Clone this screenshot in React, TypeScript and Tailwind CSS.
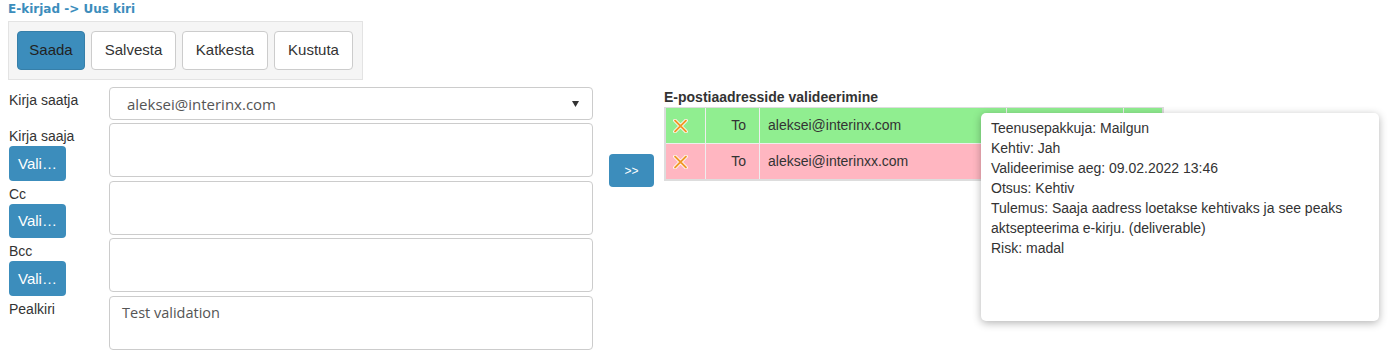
import React from "react";

const sans = "font-['Liberation_Sans',Arial,sans-serif]";
const field = "font-['Open_Sans',sans-serif]";

const CrossIcon = () => (
  <svg width="15" height="14" viewBox="0 0 15 14">
    <path d="M2 1.5 L13 12.5 M13 1.5 L2 12.5" stroke="#ffffff" strokeWidth="3.6" strokeLinecap="round" />
    <path d="M2 1.5 L13 12.5 M13 1.5 L2 12.5" stroke="#f0982a" strokeWidth="1.8" strokeLinecap="round" />
  </svg>
);

const ValiButton = () => (
  <button className="h-[34.5px] w-[57px] rounded-[4px] bg-[#3c8dbc] text-left pl-[9px] text-[15px] leading-none text-white">
    Vali…
  </button>
);

const FieldRow = ({ label, withButton, text }: { label: string; withButton?: boolean; text?: string }) => (
  <div className="flex items-start">
    <div className="w-[101px] pt-[3px] pl-[1px]">
      <div className="leading-[20px] text-[14px] text-[#333]">{label}</div>
      {withButton && <ValiButton />}
    </div>
    <div
      className={`${field} h-[54px] w-[484px] rounded-[4px] border border-[#cccccc] bg-white pl-[12px] pt-[6px] text-[14.5px] leading-[20px] text-[#555]`}
    >
      {text}
    </div>
  </div>
);

const rows = [
  { color: "bg-[#90ee90]", email: "aleksei@interinx.com" },
  { color: "bg-[#ffb6c1]", email: "aleksei@interinxx.com" },
];

export default function App() {
  return (
    <div className={`${sans} relative min-h-[352px] bg-white px-[8px] text-[#333]`}>
      {/* Breadcrumb */}
      <div className="pt-[2px] font-['DejaVu_Sans',sans-serif] text-[12px] font-bold leading-[14px] text-[#3c8dbc]">
        E-kirjad -&gt; Uus kiri
      </div>

      {/* Toolbar */}
      <div className="mt-[5px] inline-flex gap-[6px] border border-[#e3e3e3] bg-[#f5f5f5] py-[9px] pl-[8px] pr-[9px]">
        <button className="h-[39px] w-[68px] rounded-[4px] border border-[#367fa9] bg-[#3c8dbc] text-[15px] text-[#222]">
          Saada
        </button>
        <button className="h-[39px] w-[85px] rounded-[4px] border border-[#cccccc] bg-white text-[15px] text-[#333]">
          Salvesta
        </button>
        <button className="h-[39px] w-[86px] rounded-[4px] border border-[#cccccc] bg-white text-[15px] text-[#333]">
          Katkesta
        </button>
        <button className="h-[39px] w-[79px] rounded-[4px] border border-[#cccccc] bg-white text-[15px] text-[#333]">
          Kustuta
        </button>
      </div>

      <div className="mt-[7px] flex items-start">
        {/* Form */}
        <div className="flex flex-col">
          <div className="mb-[3px] flex items-start">
            <div className="w-[101px] pt-[3px] pl-[1px] text-[14px] leading-[20px] text-[#333]">Kirja saatja</div>
            <div
              className={`${field} flex h-[33px] w-[484px] items-center justify-between rounded-[4px] border border-[#cccccc] bg-white pl-[17px] pr-[13px] text-[15px] leading-[20px] text-[#555]`}
            >
              <span>aleksei@interinx.com</span>
              <svg width="7" height="6" viewBox="0 0 7 6">
                <path d="M0 0 H7 L3.5 6 Z" fill="#333" />
              </svg>
            </div>
          </div>
          <FieldRow label="Kirja saaja" withButton />
          <FieldRow label="Cc" withButton />
          <FieldRow label="Bcc" withButton />
          <FieldRow label="Pealkiri" text="Test validation" />
        </div>

        {/* Move button */}
        <button className="ml-[16px] mt-[67px] h-[33px] w-[45px] rounded-[4px] bg-[#3c8dbc] text-[12px] text-white">
          &gt;&gt;
        </button>

        {/* Validation table */}
        <div className="ml-[10px] mt-[1px]">
          <div className="text-[14px] font-bold leading-[19px] text-[#333]">E-postiaadresside valideerimine</div>
          <div className="grid w-[500px] grid-cols-[39px_53px_246px_116px_38px] gap-[1px] border-x-2 border-b-2 border-t border-[#dddddd] bg-[#eeeeee]">
            {rows.map((r) => (
              <React.Fragment key={r.email}>
                <div className={`${r.color} flex h-[35px] items-center pl-[7px]`}>
                  <CrossIcon />
                </div>
                <div className={`${r.color} flex h-[35px] items-center justify-end pr-[13px] text-[14px]`}>To</div>
                <div className={`${r.color} flex h-[35px] items-center pl-[8px] text-[14px]`}>{r.email}</div>
                <div className={`${r.color} h-[35px]`} />
                <div className={`${r.color} h-[35px]`} />
              </React.Fragment>
            ))}
          </div>
        </div>
      </div>

      {/* Tooltip */}
      <div className="absolute left-[981px] top-[113px] h-[208px] w-[398px] rounded-[5px] bg-white pl-[10px] pr-[12px] pt-[5px] text-[14px] leading-[20px] text-[#333] shadow-[0_2px_8px_rgba(0,0,0,0.3)]">
        <div>Teenusepakkuja: Mailgun</div>
        <div>Kehtiv: Jah</div>
        <div>Valideerimise aeg: 09.02.2022 13:46</div>
        <div>Otsus: Kehtiv</div>
        <div>Tulemus: Saaja aadress loetakse kehtivaks ja see peaks aktsepteerima e-kirju. (deliverable)</div>
        <div>Risk: madal</div>
      </div>
    </div>
  );
}
